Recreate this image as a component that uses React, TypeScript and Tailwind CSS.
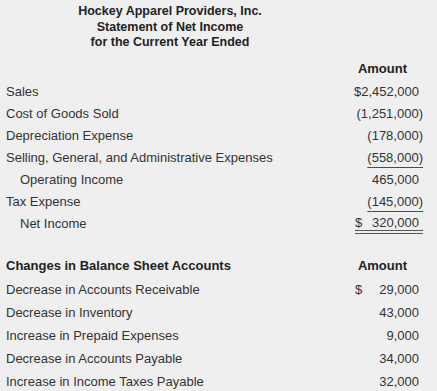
import React from "react";

type Row = { label: string; value: React.ReactNode; indent?: boolean };

const P = ({ v, line }: { v: string; line?: boolean }) => (
  <span className={line ? "underline decoration-[#4a4a4a] decoration-1 underline-offset-[5px]" : ""}>({v})</span>
);

const N = ({ v }: { v: string }) => <span className="pr-[4px]">{v}</span>;

export default function App() {
  const top: Row[] = [
    { label: "Sales", value: <N v="$2,452,000" /> },
    { label: "Cost of Goods Sold", value: <P v="1,251,000" /> },
    { label: "Depreciation Expense", value: <P v="178,000" /> },
    { label: "Selling, General, and Administrative Expenses", value: <P v="558,000" line /> },
    { label: "Operating Income", value: <N v="465,000" />, indent: true },
    { label: "Tax Expense", value: <P v="145,000" line /> },
    {
      label: "Net Income",
      indent: true,
      value: (
        <span className="flex w-[68px] justify-between pr-[4px] leading-[14px] border-b-[4px] border-double border-[#555] mt-[3px]">
          <span>$</span>
          <span>320,000</span>
        </span>
      ),
    },
  ];
  const bottom: Row[] = [
    {
      label: "Decrease in Accounts Receivable",
      value: (
        <span className="flex w-[68px] justify-between pr-[4px]">
          <span>$</span>
          <span>29,000</span>
        </span>
      ),
    },
    { label: "Decrease in Inventory", value: <N v="43,000" /> },
    { label: "Increase in Prepaid Expenses", value: <N v="9,000" /> },
    { label: "Decrease in Accounts Payable", value: <N v="34,000" /> },
    { label: "Increase in Income Taxes Payable", value: <N v="32,000" /> },
  ];

  return (
    <div
      className="w-[437px] h-[391px] overflow-hidden bg-[#efefef] text-[#333] text-[13px]"
      style={{ fontFamily: '"Liberation Sans", Arial, sans-serif' }}
    >
      <div className="w-[340px] pt-[4px] text-center font-bold text-[12.5px] leading-[15.5px] text-[#222]">
        <div>Hockey Apparel Providers, Inc.</div>
        <div>Statement of Net Income</div>
        <div>for the Current Year Ended</div>
      </div>

      <div className="mt-[7px] flex h-[22px] items-center justify-end pr-[30px] font-bold text-[#222]">
        <span>Amount</span>
      </div>
      <div className="mt-[1px]">
        {top.map((r) => (
          <div key={r.label} className="flex h-[22px] items-center justify-between pl-[6px] pr-[14px]">
            <span className={r.indent ? "pl-[14px]" : ""}>{r.label}</span>
            {r.value}
          </div>
        ))}
      </div>

      <div className="mt-[20px] flex h-[22px] items-center justify-between pl-[6px] pr-[30px] font-bold text-[#222]">
        <span>Changes in Balance Sheet Accounts</span>
        <span>Amount</span>
      </div>
      <div className="mt-[2px]">
        {bottom.map((r) => (
          <div key={r.label} className="flex h-[23px] items-center justify-between pl-[6px] pr-[14px]">
            <span>{r.label}</span>
            {r.value}
          </div>
        ))}
      </div>
    </div>
  );
}
